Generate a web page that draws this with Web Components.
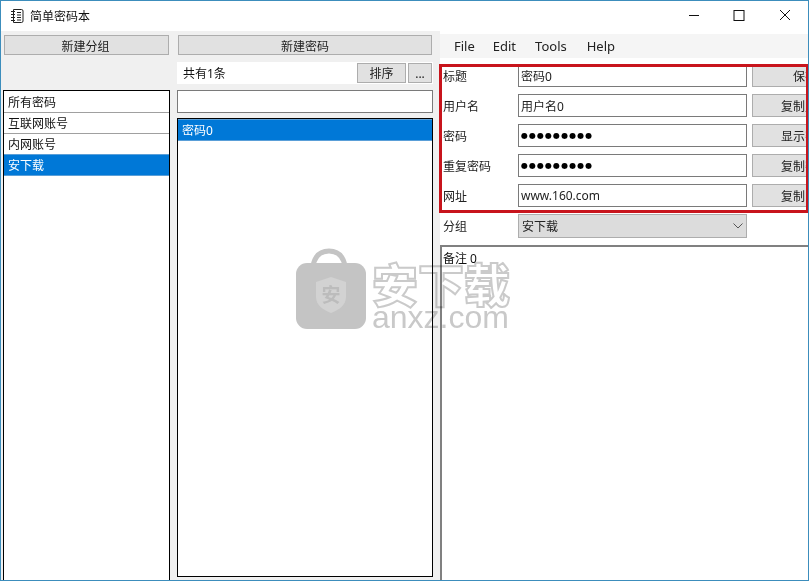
<!DOCTYPE html>
<html lang="zh">
<head>
<meta charset="utf-8">
<title>简单密码本</title>
<style>
  html, body { margin: 0; padding: 0; }
  body { font-family: "Noto Sans", "Noto Sans CJK SC", sans-serif; font-size: 12px; color: #111; }
</style>
</head>
<body>
<app-window>
  <title-bar slot="title">简单密码本</title-bar>
  <group-pane slot="left"></group-pane>
  <entry-pane slot="middle"></entry-pane>
  <detail-pane slot="right"></detail-pane>
  <brand-mark slot="overlay"></brand-mark>
</app-window>

<script>
class AppWindow extends HTMLElement {
  constructor() {
    super();
    const shadow = this.attachShadow({ mode: 'open' });
    shadow.innerHTML = `
      <style>
        :host {
          display: flex;
          flex-direction: column;
          box-sizing: border-box;
          width: 809px;
          height: 581px;
          border: 1px solid #3c8dbc;
          background-color: #fff;
          position: relative;
          overflow: hidden;
        }
        .body {
          flex: 1;
          min-height: 0;
          display: flex;
        }
      </style>
      <slot name="title"></slot>
      <div class="body">
        <slot name="left"></slot>
        <slot name="middle"></slot>
        <slot name="right"></slot>
      </div>
      <slot name="overlay"></slot>
    `;
  }
}
customElements.define('app-window', AppWindow);

class TitleBar extends HTMLElement {
  constructor() {
    super();
    const shadow = this.attachShadow({ mode: 'open' });
    shadow.innerHTML = `
      <style>
        :host {
          display: flex;
          align-items: center;
          flex: none;
          height: 30px;
          background-color: #fff;
        }
        .icon { margin-left: 9px; width: 14px; height: 14px; }
        .text { margin-left: 6px; font-size: 12px; color: #111; }
        .controls { margin-left: auto; display: flex; }
        .controls svg { width: 46px; height: 30px; }
      </style>
      <svg class="icon" viewBox="0 0 14 14" fill="none" stroke="#222" stroke-width="1">
        <path d="M3.5 .5h8a1.5 1.5 0 0 1 1.5 1.5v10a1.5 1.5 0 0 1-1.5 1.5h-8z"/>
        <path d="M1 2.5h4M1 5.5h4M1 8.5h4M1 11.5h4M7 3.5h4M7 6h4M7 8.5h4M7 11h4"/>
      </svg>
      <span class="text"><slot></slot></span>
      <div class="controls">
        <svg viewBox="0 0 46 30" fill="none" stroke="#111"><path d="M19 14.5h10"/></svg>
        <svg viewBox="0 0 46 30" fill="none" stroke="#111"><rect x="18" y="9.5" width="10" height="10"/></svg>
        <svg viewBox="0 0 46 30" fill="none" stroke="#111"><path d="M18 9l10 10M28 9l-10 10"/></svg>
      </div>
    `;
  }
}
customElements.define('title-bar', TitleBar);

class UiButton extends HTMLElement {
  constructor() {
    super();
    const shadow = this.attachShadow({ mode: 'open' });
    shadow.innerHTML = `
      <style>
        :host {
          display: flex;
          align-items: center;
          justify-content: center;
          box-sizing: border-box;
          flex: none;
          height: 20px;
          background-color: #e1e1e1;
          border: 1px solid #adadad;
          font-size: 12px;
          color: #222;
          white-space: nowrap;
        }
      </style>
      <slot></slot>
    `;
  }
}
customElements.define('ui-button', UiButton);

class ListBox extends HTMLElement {
  constructor() {
    super();
    const shadow = this.attachShadow({ mode: 'open' });
    shadow.innerHTML = `
      <style>
        :host {
          display: block;
          box-sizing: border-box;
          border: 1px solid #000;
          background-color: #fff;
          overflow: hidden;
        }
      </style>
      <slot></slot>
    `;
  }
}
customElements.define('list-box', ListBox);

class ListItem extends HTMLElement {
  constructor() {
    super();
    const shadow = this.attachShadow({ mode: 'open' });
    shadow.innerHTML = `
      <style>
        :host {
          display: flex;
          align-items: center;
          box-sizing: border-box;
          height: 21px;
          padding-left: 4px;
          border-bottom: 1px solid #a0a0a0;
          font-size: 12px;
          color: #111;
        }
        :host([selected]) {
          background-color: #0078d7;
          color: #fff;
          border-top: 1px solid #5a9fd8;
          border-bottom: 1px solid #5a9fd8;
          margin-top: -1px;
          height: 22px;
        }
      </style>
      <slot></slot>
    `;
  }
}
customElements.define('list-item', ListItem);

class GroupPane extends HTMLElement {
  constructor() {
    super();
    const shadow = this.attachShadow({ mode: 'open' });
    shadow.innerHTML = `
      <style>
        :host {
          display: flex;
          flex-direction: column;
          flex: none;
          box-sizing: border-box;
          width: 172px;
          height: 100%;
          padding: 4px 0 0 2px;
          background-color: #f0f0f0;
        }
        ui-button { margin-left: 1px; width: 165px; padding: 1px 2px 0 0; }
        list-box { flex: 1; width: 167px; margin-top: 35px; margin-bottom: -2px; padding-top: 1px; }
      </style>
      <ui-button>新建分组</ui-button>
      <list-box>
        <list-item>所有密码</list-item>
        <list-item>互联网账号</list-item>
        <list-item>内网账号</list-item>
        <list-item selected>安下载</list-item>
      </list-box>
    `;
  }
}
customElements.define('group-pane', GroupPane);

class EntryPane extends HTMLElement {
  constructor() {
    super();
    const shadow = this.attachShadow({ mode: 'open' });
    shadow.innerHTML = `
      <style>
        :host {
          display: flex;
          flex-direction: column;
          flex: none;
          box-sizing: border-box;
          width: 267px;
          height: 100%;
          padding: 4px 7px 3px 4px;
          background-color: #f0f0f0;
        }
        .add { margin-left: 1px; width: 254px; padding-top: 1px; }
        .count {
          display: flex;
          align-items: center;
          gap: 2px;
          height: 22px;
          margin-top: 7px;
          padding: 0 1px 0 6px;
          background-color: #fff;
          font-size: 12px;
        }
        .count span { margin-right: auto; }
        .sort { width: 49px; }
        .more { width: 24px; }
        .search {
          box-sizing: border-box;
          height: 23px;
          margin-top: 6px;
          border: 1px solid #7a7a7a;
          background-color: #fff;
        }
        list-box { flex: 1; margin-top: 5px; }
      </style>
      <ui-button class="add">新建密码</ui-button>
      <div class="count">
        <span>共有1条</span>
        <ui-button class="sort">排序</ui-button>
        <ui-button class="more">...</ui-button>
      </div>
      <div class="search"></div>
      <list-box>
        <list-item selected style="margin-top:0">密码0</list-item>
      </list-box>
    `;
  }
}
customElements.define('entry-pane', EntryPane);

class FormRow extends HTMLElement {
  constructor() {
    super();
    const shadow = this.attachShadow({ mode: 'open' });
    const action = this.getAttribute('action');
    shadow.innerHTML = `
      <style>
        :host {
          display: grid;
          grid-template-columns: 73px 229px 106px;
          column-gap: 5px;
          align-items: stretch;
          height: 23px;
          font-size: 12px;
        }
        .label { display: flex; align-items: center; padding-left: 3px; color: #222; }
        .field {
          display: flex;
          align-items: center;
          box-sizing: border-box;
          padding-left: 2px;
          border: 1px solid #7a7a7a;
          background-color: #fff;
          color: #222;
          overflow: hidden;
          white-space: nowrap;
        }
        :host([secret]) .field {
          font-family: "DejaVu Sans", sans-serif;
          font-size: 8px;
          letter-spacing: 1.05px;
          color: #000;
        }
        ui-button { height: auto; }
      </style>
      <div class="label">${this.getAttribute('label')}</div>
      <div class="field"><slot></slot></div>
      <ui-button>${action}</ui-button>
    `;
  }
}
customElements.define('form-row', FormRow);

class DetailPane extends HTMLElement {
  constructor() {
    super();
    const shadow = this.attachShadow({ mode: 'open' });
    shadow.innerHTML = `
      <style>
        :host {
          display: flex;
          flex-direction: column;
          flex: 1;
          min-width: 0;
          height: 100%;
          position: relative;
          background-color: #fff;
          font-size: 12px;
        }
        .menu {
          display: flex;
          align-items: center;
          gap: 18px;
          flex: none;
          height: 24px;
          margin-top: 3px;
          padding-left: 14px;
          background-color: #f5f5f5;
          font-size: 13px;
          color: #222;
        }
        .menu .tools { margin-left: 1px; }
        .menu .help { margin-left: 2px; }
        .form {
          display: flex;
          flex-direction: column;
          gap: 7px;
          margin-top: 6px;
          width: 418px;
        }
        .group { display: grid; grid-template-columns: 78px 229px; height: 24px; margin-top: 7px; }
        .group .label { display: flex; align-items: center; padding-left: 3px; color: #222; }
        .select {
          display: flex;
          align-items: center;
          justify-content: space-between;
          box-sizing: border-box;
          padding: 0 3px;
          background-color: #dcdcdc;
          border: 1px solid #adadad;
          color: #222;
        }
        .notes {
          flex: 1;
          margin: 7px 0 -2px 0;
          padding: 2px 0 0 1px;
          border: 2px solid #808080;
          border-right: none;
          background-color: #fff;
          color: #111;
        }
        .outline {
          position: absolute;
          left: -1px;
          top: 33px;
          right: -1px;
          height: 149px;
          box-sizing: border-box;
          border: 3px solid #c8141c;
          pointer-events: none;
        }
      </style>
      <div class="menu"><span>File</span><span>Edit</span><span class="tools">Tools</span><span class="help">Help</span></div>
      <div class="form">
        <form-row label="标题" action="保存">密码0</form-row>
        <form-row label="用户名" action="复制账号">用户名0</form-row>
        <form-row label="密码" action="显示密码" secret>●●●●●●●●●</form-row>
        <form-row label="重复密码" action="复制密码" secret>●●●●●●●●●</form-row>
        <form-row label="网址" action="复制网址">www.160.com</form-row>
      </div>
      <div class="group">
        <div class="label">分组</div>
        <div class="select">
          <span>安下载</span>
          <svg width="10" height="6" viewBox="0 0 10 6" fill="none" stroke="#555"><path d="M.5 .5l4.5 4.5 4.5-4.5"/></svg>
        </div>
      </div>
      <div class="notes">备注 0</div>
      <div class="outline"></div>
    `;
  }
}
customElements.define('detail-pane', DetailPane);

class BrandMark extends HTMLElement {
  constructor() {
    super();
    const shadow = this.attachShadow({ mode: 'open' });
    shadow.innerHTML = `
      <style>
        :host {
          position: absolute;
          left: 294px;
          top: 247px;
          display: flex;
          gap: 6px;
          mix-blend-mode: multiply;
          pointer-events: none;
        }
        .words { display: flex; flex-direction: column; width: 140px; }
        .cn {
          height: 44px;
          margin-top: 12px;
          font: 900 46px/44px "Noto Sans CJK SC", sans-serif;
          color: transparent;
          -webkit-text-stroke: 2px #cacaca;
          white-space: nowrap;
        }
        .en {
          font: 400 32px/28px "Liberation Sans", sans-serif;
          color: #c9c9c9;
          margin-top: -1px;
          white-space: nowrap;
        }
      </style>
      <svg width="71" height="82" viewBox="0 0 71 82">
        <path d="M18 18C20 7 26 3 34 3s14 4 16 15" fill="none" stroke="#c4c4c4" stroke-width="5"/>
        <rect x="1" y="15" width="70" height="66" rx="11" fill="#c4c4c4"/>
        <path d="M36 29l15 5v15c0 8-7 13-15 16-8-3-15-8-15-16V34z" fill="#d2d2d2"/>
        <text x="36" y="54" text-anchor="middle" font-family="Noto Sans CJK SC" font-weight="700" font-size="19" fill="#bcbcbc">安</text>
      </svg>
      <div class="words">
        <div class="cn">安下载</div>
        <div class="en">anxz.com</div>
      </div>
    `;
  }
}
customElements.define('brand-mark', BrandMark);
</script>
</body>
</html>
